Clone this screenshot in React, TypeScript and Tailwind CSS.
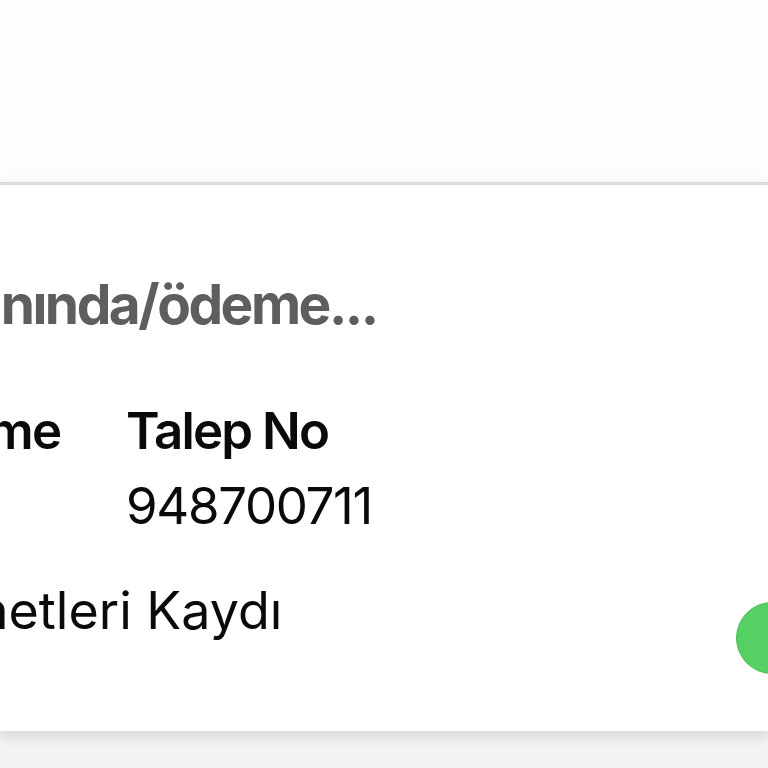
export default function App() {
  return (
    <div className="flex h-[768px] w-[768px] flex-col overflow-hidden bg-[#f3f3f3] font-['Inter','Liberation_Sans',sans-serif]">
      <div className="h-[182px] shrink-0 bg-[#fdfdfd]" />
      <div className="flex h-[549px] shrink-0 flex-col border-t-[3px] border-[#dcdcdc] bg-white shadow-[0_5px_14px_rgba(0,0,0,0.13)]">
        <div className="mt-[92px] -ml-[140px] whitespace-nowrap text-[55px] font-bold leading-none tracking-[-0.045em] text-[#5e5e5e]">
          Zamanında/ödeme...
        </div>

        <div className="mt-[73px] flex -ml-[108px] text-[51px] leading-none text-[#0a0a0a]">
          <div className="w-[234px] shrink-0 font-semibold tracking-[-0.035em]">Ödeme</div>
          <div className="flex flex-col gap-[24px]">
            <span className="font-semibold tracking-[-0.037em]">Talep No</span>
            <span className="tracking-[-0.026em]">948700711</span>
          </div>
        </div>

        <div className="mt-[54px] flex items-start justify-between -mr-[40px] text-[52px] leading-none text-[#0a0a0a]">
          <span className="-ml-[117px] whitespace-nowrap">Hizmetleri Kaydı</span>
          <span className="mt-[17px] h-[72px] w-[72px] shrink-0 rounded-full border border-[#4cba59] bg-[#55d063]" />
        </div>
      </div>
    </div>
  );
}
